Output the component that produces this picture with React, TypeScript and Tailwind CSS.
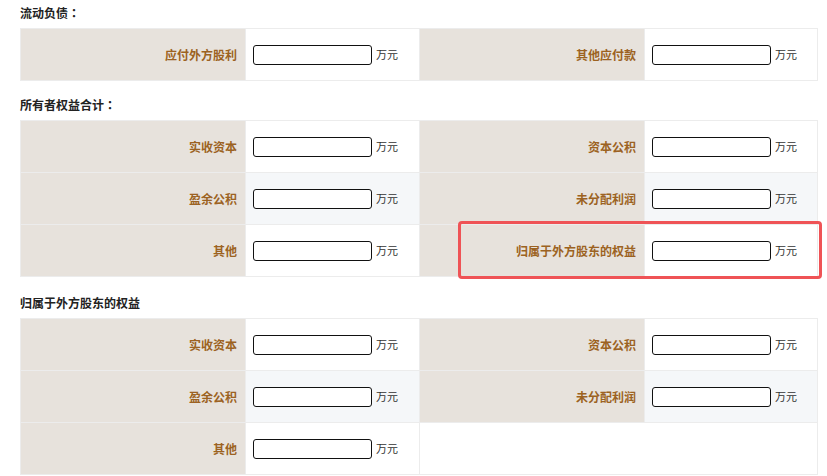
import React from "react";

const font = { fontFamily: '"Noto Sans CJK SC", "Noto Sans", sans-serif' };
const tcFont = { fontFamily: '"Noto Sans CJK TC", "Noto Sans CJK SC", sans-serif' };

function Label({ text }: { text: string }) {
  return (
    <td className="w-[225px] h-[52px] bg-[#e7e2dc] border border-[#ececec] pr-[8px] text-right align-middle text-[12px] font-bold text-[#9c6222]">
      {text}
    </td>
  );
}

function Value({ alt }: { alt?: boolean }) {
  return (
    <td className={`h-[52px] border border-[#ececec] pl-[7px] align-middle ${alt ? "bg-[#f5f7f9]" : "bg-white"}`}>
      <div className="flex items-center">
        <input className="w-[119px] h-[20px] border border-[#111] rounded-[3px] bg-white outline-none" />
        <span className="ml-[4px] text-[11px] text-[#333]">万元</span>
      </div>
    </td>
  );
}

function Heading({ text, colon, cls }: { text: string; colon?: boolean; cls: string }) {
  return (
    <div className={`h-[20px] leading-[20px] text-[12px] font-bold text-[#222] ${cls}`}>
      {text}
      {colon && <span style={tcFont}>：</span>}
    </div>
  );
}

export default function App() {
  return (
    <div className="w-[827px] h-[476px] bg-white pl-[20px] overflow-hidden" style={font}>
      <div className="w-[797px]">
        <Heading text="流动负债" colon cls="mt-[3px] mb-[5px]" />
        <table className="w-[797px] border-collapse table-fixed">
          <colgroup>
            <col className="w-[225px]" />
            <col className="w-[174px]" />
            <col className="w-[225px]" />
            <col className="w-[173px]" />
          </colgroup>
          <tbody>
            <tr>
              <Label text="应付外方股利" />
              <Value />
              <Label text="其他应付款" />
              <Value />
            </tr>
          </tbody>
        </table>

        <Heading text="所有者权益合计" colon cls="mt-[14px] mb-[5px]" />
        <div className="relative">
          <table className="w-[797px] border-collapse table-fixed">
            <colgroup>
              <col className="w-[225px]" />
              <col className="w-[174px]" />
              <col className="w-[225px]" />
              <col className="w-[173px]" />
            </colgroup>
            <tbody>
              <tr>
                <Label text="实收资本" />
                <Value />
                <Label text="资本公积" />
                <Value />
              </tr>
              <tr>
                <Label text="盈余公积" />
                <Value alt />
                <Label text="未分配利润" />
                <Value alt />
              </tr>
              <tr>
                <Label text="其他" />
                <Value />
                <Label text="归属于外方股东的权益" />
                <Value />
              </tr>
            </tbody>
          </table>
          <div className="absolute left-[438px] top-[101px] w-[364px] h-[58px] border-[3px] border-[#ef5356] rounded-[4px] pointer-events-none" />
        </div>

        <Heading text="归属于外方股东的权益" cls="mt-[16px] mb-[5px]" />
        <table className="w-[797px] border-collapse table-fixed">
          <colgroup>
            <col className="w-[225px]" />
            <col className="w-[174px]" />
            <col className="w-[225px]" />
            <col className="w-[173px]" />
          </colgroup>
          <tbody>
            <tr>
              <Label text="实收资本" />
              <Value />
              <Label text="资本公积" />
              <Value />
            </tr>
            <tr>
              <Label text="盈余公积" />
              <Value alt />
              <Label text="未分配利润" />
              <Value alt />
            </tr>
            <tr>
              <Label text="其他" />
              <Value />
              <td colSpan={2} className="h-[52px] border border-[#ececec] bg-white" />
            </tr>
          </tbody>
        </table>
      </div>
    </div>
  );
}
